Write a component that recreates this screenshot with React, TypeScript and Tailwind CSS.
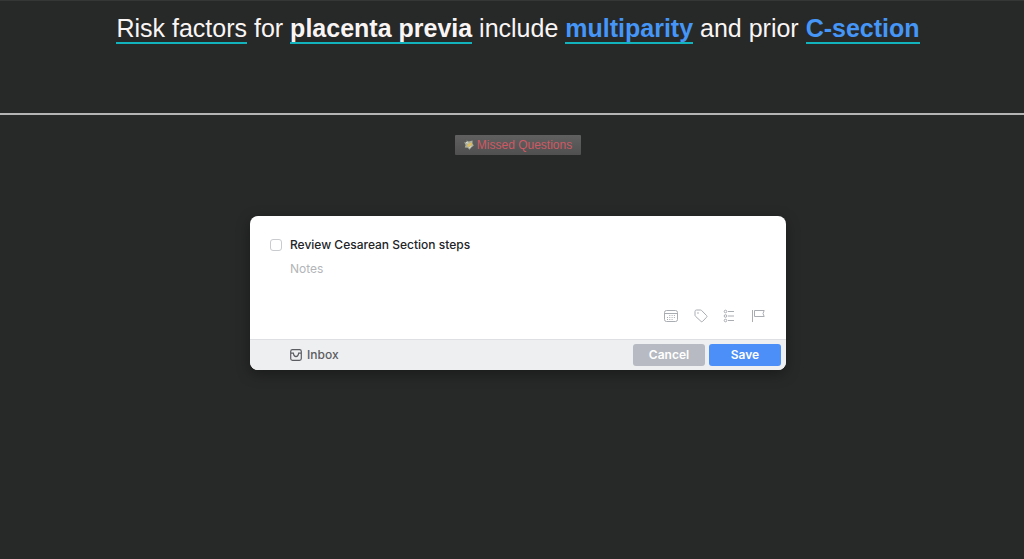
import type { ReactNode } from 'react';

function Term({ children, className = '' }: { children: ReactNode; className?: string }) {
  return <a href="#" className={`border-b-2 border-[#12b3bd] ${className}`}>{children}</a>;
}

function StarIcon() {
  return (
    <svg aria-hidden="true" viewBox="0 0 10 10" className="w-[10px] h-[10px] shrink-0">
      <path d="M2.6.4 4.8 1.4 8.6.4 8.4 3.2 9.8 5.6 7.6 7.2 5.4 9.8 3.8 7.8.8 7.6 1.6 5 .2 2.2 2.6 2.4Z" fill="#aeb09c" />
      <path d="M3 5.8 5.2 3.4 8 2.6 7.4 5 4.6 7Z" fill="#e0bd55" />
      <path d="M2 2.4 4.4 3.2M5.2 7.8 7.4 6.2" stroke="#dfe5df" strokeWidth=".9" />
    </svg>
  );
}

function CalendarIcon() {
  return (
    <svg aria-hidden="true" viewBox="0 0 16 14" className="w-4 h-[14px]" fill="none" stroke="currentColor">
      <rect x="1.5" y="1.5" width="13" height="11" rx="2" />
      <path d="M1.5 4.5h13" />
      <path d="M6.3 6.5h6M4 8.5h8.2M4 10.5h6" strokeDasharray="1 1.3" />
    </svg>
  );
}

function TagIcon() {
  return (
    <svg aria-hidden="true" viewBox="0 0 14 14" className="w-[14px] h-[14px]" fill="none" stroke="currentColor">
      <path d="M1 2.5C1 1.7 1.6 1 2.5 1h4q.6 0 1 .4l5.1 5.2q.8.8 0 1.6l-4 4.2q-.8.8-1.6 0L1.5 7.3Q1 6.8 1 6.2Z" strokeLinejoin="round" />
      <circle cx="4" cy="4" r=".8" fill="currentColor" stroke="none" />
    </svg>
  );
}

function ChecklistIcon() {
  return (
    <svg aria-hidden="true" viewBox="0 0 14 14" className="w-[14px] h-[14px]" fill="none" stroke="currentColor">
      <circle cx="2.5" cy="2.5" r="1.3" />
      <circle cx="2.5" cy="7" r="1.3" />
      <circle cx="2.5" cy="11.5" r="1.3" />
      <path d="M5 2.5h6M5 7h6M5 11.5h6" />
    </svg>
  );
}

function FlagIcon() {
  return (
    <svg aria-hidden="true" viewBox="0 0 14 14" className="w-[14px] h-[14px]" fill="none" stroke="currentColor">
      <path d="M.5 1v12" />
      <path d="M2.5 1.5h9.7L11 4.5l1.2 3H2.5Z" strokeLinejoin="round" />
    </svg>
  );
}

function InboxIcon() {
  return (
    <svg aria-hidden="true" viewBox="0 0 12 12" className="w-3 h-3" fill="none" stroke="currentColor" strokeWidth="1.2">
      <rect x=".7" y=".7" width="10.6" height="10.6" rx="1.8" />
      <path d="M1 4.2h2.4q.4 3.4 2.6 3.4t2.6-3.4H11" />
    </svg>
  );
}

const tools = [
  { label: 'Date', icon: <CalendarIcon /> },
  { label: 'Tags', icon: <TagIcon /> },
  { label: 'Checklist', icon: <ChecklistIcon /> },
  { label: 'Flag', icon: <FlagIcon /> },
];

function QuickEntry() {
  return (
    <form
      className="w-full max-w-[536px] overflow-hidden rounded-lg bg-white font-['Inter',sans-serif] text-[12px] shadow-[0_4px_14px_rgba(0,0,0,0.35)]"
      onSubmit={(e) => e.preventDefault()}
    >
      <div className="px-5 pt-5 pb-4">
        <div className="flex items-center gap-2">
          <input
            type="checkbox"
            aria-label="Completed"
            className="h-3 w-3 shrink-0 appearance-none rounded-[3px] border border-[#c9cbce] checked:bg-[#4c8ff8]"
          />
          <input
            type="text"
            aria-label="Title"
            defaultValue="Review Cesarean Section steps"
            className="h-[18px] flex-1 font-medium text-[#222427] outline-none"
          />
        </div>
        <textarea
          aria-label="Notes"
          placeholder="Notes"
          rows={2}
          className="mt-[6px] block w-full resize-none pl-5 leading-[18px] text-[#222427] outline-none placeholder:text-[#b3b5b9]"
        />
        <div className="mt-[13px] flex justify-end gap-[15px] text-[#a9acb1]">
          {tools.map((t) => (
            <button key={t.label} type="button" aria-label={t.label} className="flex">
              {t.icon}
            </button>
          ))}
        </div>
      </div>
      <div className="flex items-center justify-between border-t border-[#dedfe2] bg-[#eeeff1] py-1 pr-[5px] pl-10">
        <button type="button" className="flex items-center gap-[5px] font-medium text-[#5b5d62]">
          <InboxIcon />
          Inbox
        </button>
        <div className="flex gap-1 font-semibold text-white">
          <button type="button" className="h-[22px] w-[72px] rounded-[3px] bg-[#b7bac2]">Cancel</button>
          <button type="submit" className="h-[22px] w-[72px] rounded-[3px] bg-[#4c8ff8]">Save</button>
        </div>
      </div>
    </form>
  );
}

export default function App() {
  return (
    <main className="min-h-screen border-t border-[#343736] bg-[#272928] font-['Liberation_Sans',Arial,sans-serif]">
      <p className="pt-3 pb-[70px] pl-3 text-center text-[25px] leading-[30px] text-[#faf5f5]">
        <Term>Risk factors</Term> for <Term className="font-bold">placenta previa</Term> include{' '}
        <Term className="font-bold text-[#4596f7]">multiparity</Term> and prior{' '}
        <Term className="font-bold text-[#4596f7]">C-section</Term>
      </p>
      <hr className="border-t-2 border-[#b4b5b4]" />
      <div className="flex flex-col items-center pt-5 pl-3">
        <button
          type="button"
          className="mb-[61px] flex h-5 items-center gap-[3px] rounded-[1px] bg-linear-to-b from-[#606060] to-[#505050] px-[9px] text-[12px] text-[#cf5964]"
        >
          <StarIcon />
          Missed Questions
        </button>
        <QuickEntry />
      </div>
    </main>
  );
}
